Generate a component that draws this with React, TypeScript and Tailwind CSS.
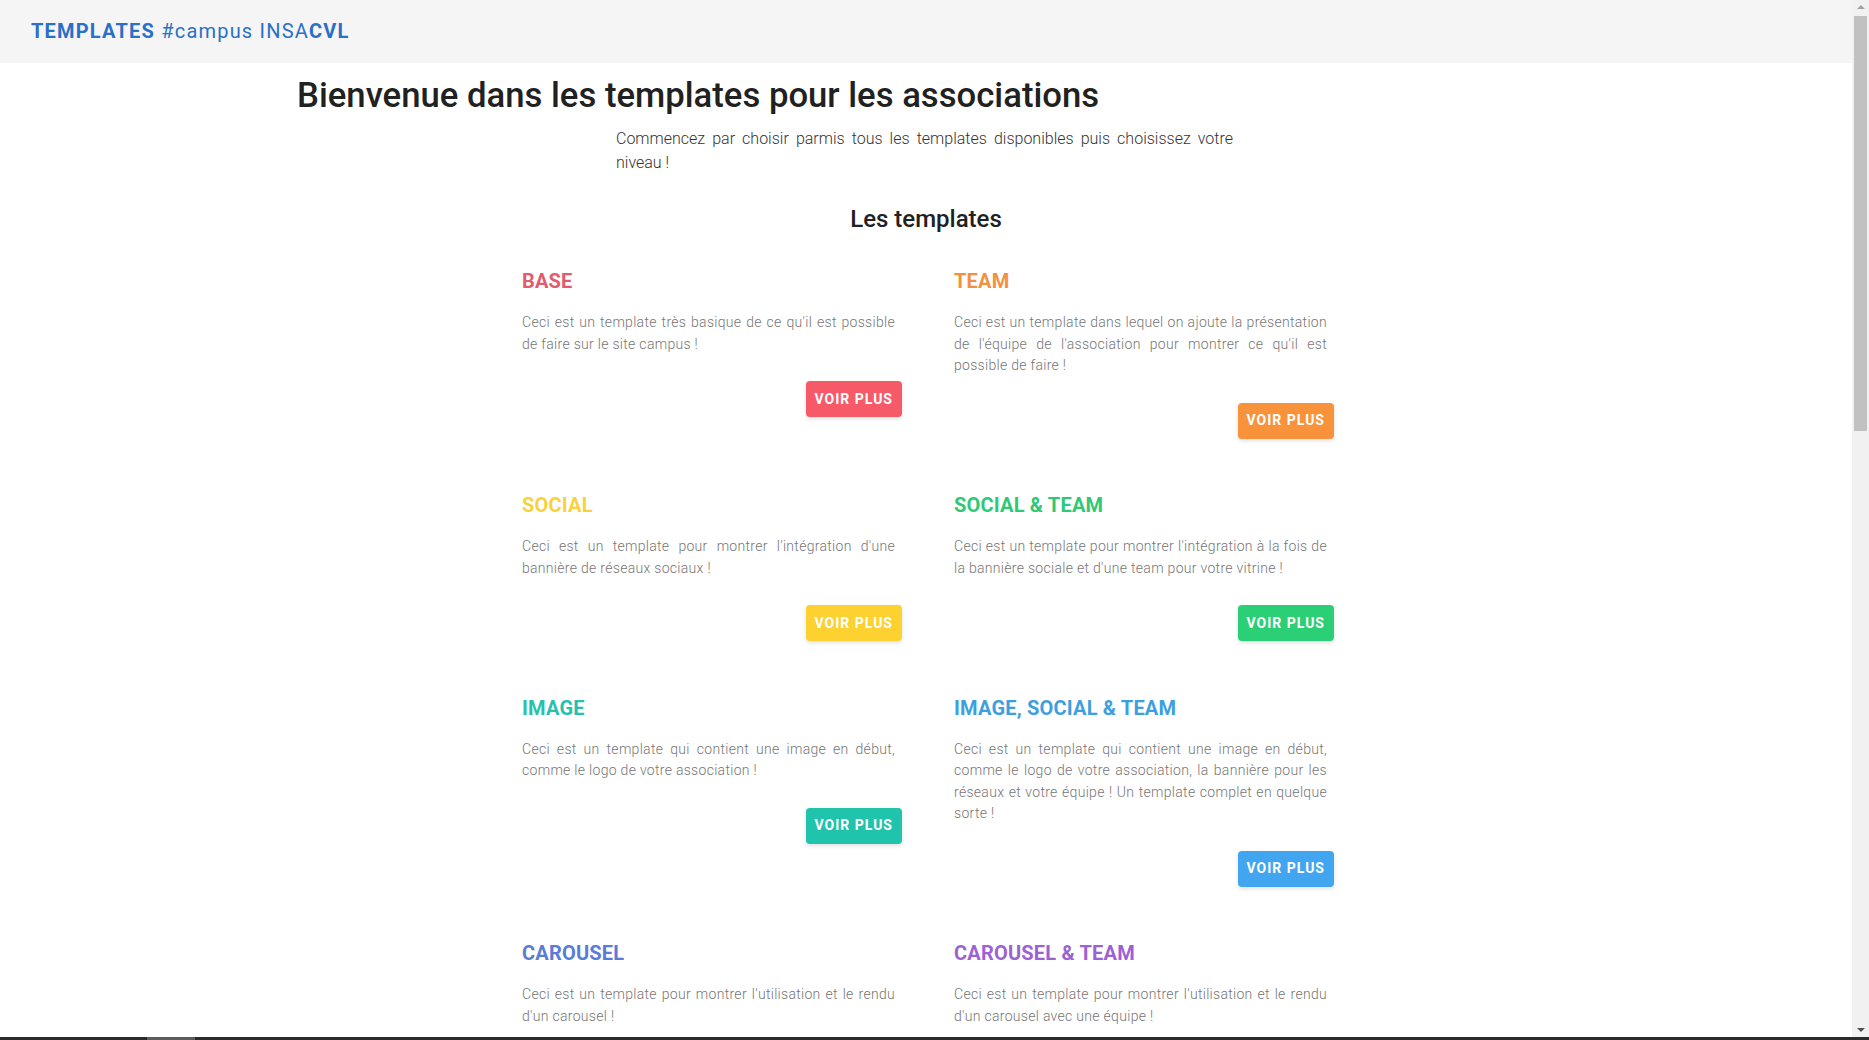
import { ReactNode } from "react";

type Template = {
    id: string;
    title: string;
    text: string;
    titleClass: string;
    buttonClass: string;
};

const templates: Template[] = [
    {
        id: "base",
        title: "BASE",
        text: "Ceci est un template très basique de ce qu'il est possible de faire sur le site campus !",
        titleClass: "text-[#e05c6e]",
        buttonClass: "bg-[#f65a68]",
    },
    {
        id: "team",
        title: "TEAM",
        text: "Ceci est un template dans lequel on ajoute la présentation de l'équipe de l'association pour montrer ce qu'il est possible de faire !",
        titleClass: "text-[#f2913f]",
        buttonClass: "bg-[#f8933c]",
    },
    {
        id: "social",
        title: "SOCIAL",
        text: "Ceci est un template pour montrer l'intégration d'une bannière de réseaux sociaux !",
        titleClass: "text-[#f7d23c]",
        buttonClass: "bg-[#fcd130]",
    },
    {
        id: "social-team",
        title: "SOCIAL & TEAM",
        text: "Ceci est un template pour montrer l'intégration à la fois de la bannière sociale et d'une team pour votre vitrine !",
        titleClass: "text-[#2fc876]",
        buttonClass: "bg-[#2bcf75]",
    },
    {
        id: "image",
        title: "IMAGE",
        text: "Ceci est un template qui contient une image en début, comme le logo de votre association !",
        titleClass: "text-[#27bfae]",
        buttonClass: "bg-[#20c3ab]",
    },
    {
        id: "image-social-team",
        title: "IMAGE, SOCIAL & TEAM",
        text: "Ceci est un template qui contient une image en début, comme le logo de votre association, la bannière pour les réseaux et votre équipe ! Un template complet en quelque sorte !",
        titleClass: "text-[#3d9fdf]",
        buttonClass: "bg-[#42a5ef]",
    },
    {
        id: "carousel",
        title: "CAROUSEL",
        text: "Ceci est un template pour montrer l'utilisation et le rendu d'un carousel !",
        titleClass: "text-[#5a7bd6]",
        buttonClass: "bg-[#5f7fe0]",
    },
    {
        id: "carousel-team",
        title: "CAROUSEL & TEAM",
        text: "Ceci est un template pour montrer l'utilisation et le rendu d'un carousel avec une équipe !",
        titleClass: "text-[#9c62d3]",
        buttonClass: "bg-[#a066dc]",
    },
];

function Navbar() {
    return (
        <nav className="h-[63px] shrink-0 bg-[#f5f5f5] flex items-center pl-[31px] pb-[1px]">
            <span className="text-[20px] leading-none tracking-[1.2px] text-[#2a70c6]">
                <b className="font-bold">TEMPLATES</b> #campus INSA<b className="font-bold">CVL</b>
            </span>
        </nav>
    );
}

function TemplateCard({ tpl }: { tpl: Template }) {
    return (
        <div className="pl-[28px] pr-[24px] flex flex-col">
            <h3 className={`text-[20px] leading-[24px] font-bold tracking-[0.2px] ${tpl.titleClass}`}>{tpl.title}</h3>
            <p className="mt-[19px] pr-[7px] text-[14px] leading-[21.5px] font-light tracking-[0.3px] text-[#767676] text-justify">
                {tpl.text}
            </p>
            <div className="mt-[26px] flex justify-end">
                <button
                    className={`h-[36px] px-[9px] rounded-[4px] text-white text-[14px] font-bold tracking-[1px] shadow-[0_2px_4px_rgba(0,0,0,0.12)] ${tpl.buttonClass}`}
                >
                    VOIR PLUS
                </button>
            </div>
        </div>
    );
}

function Scrollbar() {
    return (
        <div className="w-[17px] shrink-0 bg-[#f1f1f1] flex flex-col items-center">
            <div className="h-[14px] flex items-center justify-center">
                <div className="w-0 h-0 border-l-[4px] border-r-[4px] border-b-[4px] border-l-transparent border-r-transparent border-b-[#a3a3a3]" />
            </div>
            <div className="w-[13px] h-[415px] bg-[#c1c1c1] mt-[2px]" />
            <div className="flex-1" />
            <div className="h-[14px] flex items-center justify-center">
                <div className="w-0 h-0 border-l-[4px] border-r-[4px] border-t-[4px] border-l-transparent border-r-transparent border-t-[#505050]" />
            </div>
        </div>
    );
}

function Page({ children }: { children: ReactNode }) {
    return (
        <div className="h-[1040px] w-full overflow-hidden flex flex-col bg-white font-['Roboto',sans-serif]">
            <div className="flex-1 flex min-h-0">
                <div className="flex-1 min-w-0 overflow-hidden flex flex-col">{children}</div>
                <Scrollbar />
            </div>
            <div className="h-[3px] shrink-0 bg-[#2b2b2b] flex">
                <div className="ml-[147px] w-[48px] bg-[#5c5c5c]" />
            </div>
        </div>
    );
}

export default function App() {
    return (
        <Page>
            <Navbar />
            <main className="flex flex-col">
                <h1 className="pl-[297px] mt-[12px] text-[34.7px] leading-[40px] font-medium text-[#212121]">
                    Bienvenue dans les templates pour les associations
                </h1>
                <p className="mt-[12px] ml-[616px] w-[617px] text-[16px] leading-[24px] font-light text-[#333333] text-justify">
                    Commencez par choisir parmis tous les templates disponibles puis choisissez votre niveau !
                </p>
                <h2 className="mt-[30px] text-center text-[24px] leading-[29px] font-medium text-[#212121]">
                    Les templates
                </h2>
                <div className="mt-[35px] mx-auto w-[864px] grid grid-cols-2 gap-y-[54.5px] items-start pb-[80px]">
                    {templates.map((tpl) => (
                        <TemplateCard key={tpl.id} tpl={tpl} />
                    ))}
                </div>
            </main>
        </Page>
    );
}
